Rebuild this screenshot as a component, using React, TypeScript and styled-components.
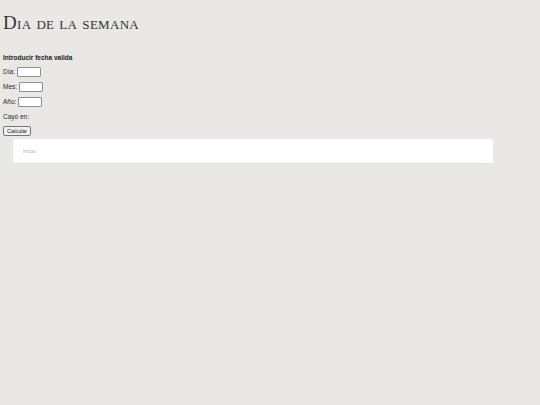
import React from "react";
import styled, { createGlobalStyle } from "styled-components";

const Global = createGlobalStyle`
  html, body { margin: 0; padding: 0; background: #e9e8e4; }
  body { font-family: "Liberation Sans", Arial, sans-serif; color: #222; }
`;

const Page = styled.div`
  padding: 0 3px;
  min-height: 405px;
  box-sizing: border-box;
`;

const Title = styled.h1`
  margin: 0;
  padding-top: 12px;
  font-family: "Liberation Serif", "Times New Roman", serif;
  font-variant: small-caps;
  font-weight: normal;
  font-size: 19px;
  line-height: 22px;
  color: #333;
  letter-spacing: 0.3px;
`;

const Form = styled.form`
  display: flex;
  flex-direction: column;
  margin-top: 20px;
`;

const Heading = styled.div`
  font-size: 6.5px;
  font-weight: bold;
  line-height: 8px;
  height: 8px;
  color: #222;
`;

const Row = styled.label<{ $top: number }>`
  display: flex;
  align-items: center;
  gap: 2px;
  margin-top: ${(p) => p.$top}px;
  font-size: 6.5px;
  line-height: 10px;
  height: 10px;
  color: #2a2a2a;
`;

const Input = styled.input`
  box-sizing: border-box;
  width: 24px;
  height: 10px;
  margin: 0;
  padding: 0;
  border: 1px solid #8f8f8f;
  border-radius: 1px;
  background: #fff;
`;

const Button = styled.button`
  align-self: flex-start;
  box-sizing: border-box;
  margin-top: 4px;
  height: 10px;
  padding: 0 3px;
  font-family: "Liberation Sans", Arial, sans-serif;
  font-size: 5.5px;
  line-height: 8px;
  color: #222;
  background: #efefef;
  border: 1px solid #767676;
  border-radius: 2px;
`;

const Panel = styled.div`
  box-sizing: border-box;
  margin: 3px 0 0 10px;
  width: 480px;
  height: 25px;
  background: #fff;
  border-radius: 2px;
  border-bottom: 1px solid #f1dede;
  display: flex;
  align-items: center;
  padding-left: 10px;
`;

const PanelText = styled.span`
  font-size: 5.5px;
  color: #b5b5b5;
`;

export default function App() {
  return (
    <>
      <Global />
      <Page>
        <Title>Dia de la semana</Title>
        <Form onSubmit={(e) => e.preventDefault()}>
          <Heading>Introducir fecha valida</Heading>
          <Row $top={5}>
            Día: <Input type="text" />
          </Row>
          <Row $top={5}>
            Mes: <Input type="text" />
          </Row>
          <Row $top={5}>
            Año: <Input type="text" />
          </Row>
          <Row $top={5}>Cayó en:</Row>
          <Button type="submit">Calcular</Button>
        </Form>
        <Panel>
          <PanelText>Inicio</PanelText>
        </Panel>
      </Page>
    </>
  );
}
